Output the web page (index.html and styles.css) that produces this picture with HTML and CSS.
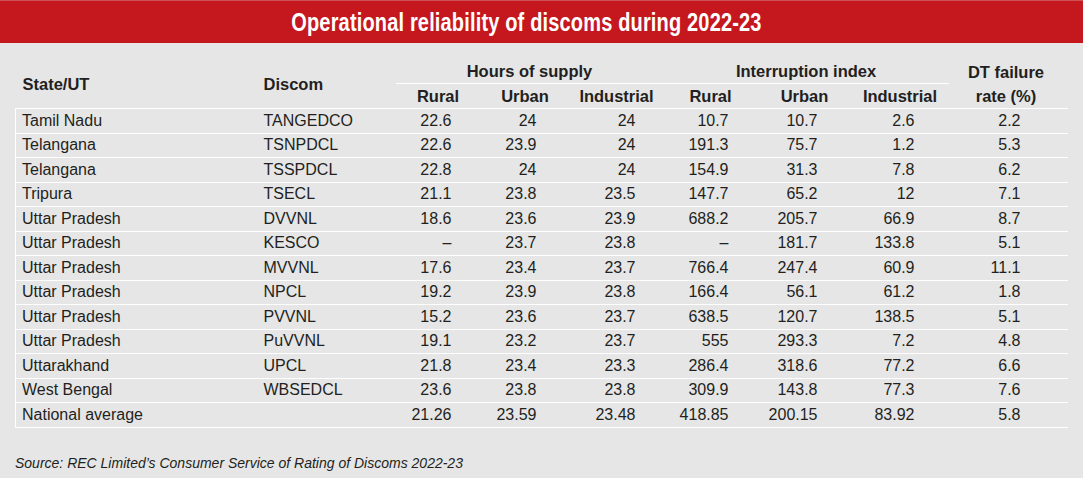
FILE: index.html
```html
<!DOCTYPE html>
<html lang="en">
<head>
<meta charset="utf-8">
<title>Operational reliability of discoms during 2022-23</title>
<link rel="stylesheet" href="styles.css">
</head>
<body>
<div class="page">
  <header class="banner"><h1 class="title"><span>Operational reliability of discoms during 2022-23</span></h1></header>
  <div class="content">
    <table class="data">
      <colgroup>
        <col class="c-state"><col class="c-discom"><col class="c-hr"><col class="c-hu"><col class="c-hi"><col class="c-ir"><col class="c-iu"><col class="c-ii"><col class="c-dt">
      </colgroup>
      <thead>
        <tr class="hrow1">
          <th rowspan="2" class="th-left th-state">State/UT</th>
          <th rowspan="2" class="th-left th-discom">Discom</th>
          <th colspan="3" class="th-group">Hours of supply</th>
          <th colspan="3" class="th-group">Interruption index</th>
          <th rowspan="2" class="th-dt">DT failure<br>rate (%)</th>
        </tr>
        <tr class="hrow2">
          <th>Rural</th><th>Urban</th><th>Industrial</th>
          <th>Rural</th><th>Urban</th><th>Industrial</th>
        </tr>
      </thead>
      <tbody>
        <tr><td class="state">Tamil Nadu</td><td class="discom">TANGEDCO</td><td class="hr">22.6</td><td class="hu">24</td><td class="hi">24</td><td class="ir">10.7</td><td class="iu">10.7</td><td class="ii">2.6</td><td class="dt">2.2</td></tr>
        <tr><td class="state">Telangana</td><td class="discom">TSNPDCL</td><td class="hr">22.6</td><td class="hu">23.9</td><td class="hi">24</td><td class="ir">191.3</td><td class="iu">75.7</td><td class="ii">1.2</td><td class="dt">5.3</td></tr>
        <tr><td class="state">Telangana</td><td class="discom">TSSPDCL</td><td class="hr">22.8</td><td class="hu">24</td><td class="hi">24</td><td class="ir">154.9</td><td class="iu">31.3</td><td class="ii">7.8</td><td class="dt">6.2</td></tr>
        <tr><td class="state">Tripura</td><td class="discom">TSECL</td><td class="hr">21.1</td><td class="hu">23.8</td><td class="hi">23.5</td><td class="ir">147.7</td><td class="iu">65.2</td><td class="ii">12</td><td class="dt">7.1</td></tr>
        <tr><td class="state">Uttar Pradesh</td><td class="discom">DVVNL</td><td class="hr">18.6</td><td class="hu">23.6</td><td class="hi">23.9</td><td class="ir">688.2</td><td class="iu">205.7</td><td class="ii">66.9</td><td class="dt">8.7</td></tr>
        <tr><td class="state">Uttar Pradesh</td><td class="discom">KESCO</td><td class="hr">–</td><td class="hu">23.7</td><td class="hi">23.8</td><td class="ir">–</td><td class="iu">181.7</td><td class="ii">133.8</td><td class="dt">5.1</td></tr>
        <tr><td class="state">Uttar Pradesh</td><td class="discom">MVVNL</td><td class="hr">17.6</td><td class="hu">23.4</td><td class="hi">23.7</td><td class="ir">766.4</td><td class="iu">247.4</td><td class="ii">60.9</td><td class="dt">11.1</td></tr>
        <tr><td class="state">Uttar Pradesh</td><td class="discom">NPCL</td><td class="hr">19.2</td><td class="hu">23.9</td><td class="hi">23.8</td><td class="ir">166.4</td><td class="iu">56.1</td><td class="ii">61.2</td><td class="dt">1.8</td></tr>
        <tr><td class="state">Uttar Pradesh</td><td class="discom">PVVNL</td><td class="hr">15.2</td><td class="hu">23.6</td><td class="hi">23.7</td><td class="ir">638.5</td><td class="iu">120.7</td><td class="ii">138.5</td><td class="dt">5.1</td></tr>
        <tr><td class="state">Uttar Pradesh</td><td class="discom">PuVVNL</td><td class="hr">19.1</td><td class="hu">23.2</td><td class="hi">23.7</td><td class="ir">555</td><td class="iu">293.3</td><td class="ii">7.2</td><td class="dt">4.8</td></tr>
        <tr><td class="state">Uttarakhand</td><td class="discom">UPCL</td><td class="hr">21.8</td><td class="hu">23.4</td><td class="hi">23.3</td><td class="ir">286.4</td><td class="iu">318.6</td><td class="ii">77.2</td><td class="dt">6.6</td></tr>
        <tr><td class="state">West Bengal</td><td class="discom">WBSEDCL</td><td class="hr">23.6</td><td class="hu">23.8</td><td class="hi">23.8</td><td class="ir">309.9</td><td class="iu">143.8</td><td class="ii">77.3</td><td class="dt">7.6</td></tr>
        <tr><td class="state">National average</td><td class="discom"></td><td class="hr">21.26</td><td class="hu">23.59</td><td class="hi">23.48</td><td class="ir">418.85</td><td class="iu">200.15</td><td class="ii">83.92</td><td class="dt">5.8</td></tr>
      </tbody>
    </table>
    <p class="source">Source: REC Limited’s Consumer Service of Rating of Discoms 2022-23</p>
  </div>
</div>
</body>
</html>
```

FILE: styles.css
```css
html, body {
  margin: 0;
  padding: 0;
  background: #e6e6e7;
}

.page {
  width: 1083px;
  height: 478px;
  background: #e6e6e7;
  color: #231f20;
  font-family: "Liberation Sans", Arial, sans-serif;
  overflow: hidden;
}

.banner {
  height: 42px;
  background: #c5171e;
  border-top: 1px solid #cd5156;
  display: flex;
  align-items: center;
  justify-content: center;
  padding-right: 30px;
}

.title {
  margin: 0;
  color: #ffffff;
  font-family: "Liberation Sans Narrow", "Liberation Sans", Arial, sans-serif;
  font-weight: 700;
  font-size: 26px;
  line-height: 42px;
  white-space: nowrap;
}

.title span {
  display: inline-block;
  transform: scaleX(0.77);
  letter-spacing: 0.2px;
}

.content {
  padding: 17px 0 0 15px;
}

.data {
  border-collapse: collapse;
  table-layout: fixed;
  width: 1052px;
}

.c-state { width: 240px; }
.c-discom { width: 140px; }
.c-hr { width: 85px; }
.c-hu { width: 89px; }
.c-hi { width: 94px; }
.c-ir { width: 94px; }
.c-iu { width: 94px; }
.c-ii { width: 97px; }
.c-dt { width: 119px; }

.data th {
  font-weight: 700;
  font-size: 16.5px;
  padding: 0;
  text-align: center;
  vertical-align: middle;
  line-height: 24px;
}

.data .hrow1 th {
  height: 23px;
}

.data .hrow2 th {
  height: 24px;
}

.data th.th-group {
  border-bottom: 1px solid #ffffff;
  line-height: 23px;
}

.data th.th-left {
  text-align: left;
}

.data th.th-state {
  padding-left: 7px;
}

.data th.th-discom {
  padding-left: 8px;
}

.data th.th-dt {
  padding-right: 4px;
}

.data tbody tr {
  border-top: 1px solid #ffffff;
}

.data tbody tr:last-child {
  border-bottom: 1px solid #ffffff;
}

.data td {
  height: 23.5px;
  padding: 0;
  font-size: 16px;
  line-height: 20px;
  text-align: right;
  vertical-align: middle;
  white-space: nowrap;
}

.data td.state {
  text-align: left;
  padding-left: 6px;
  border-left: 1px solid #ffffff;
}

.data td.discom {
  text-align: left;
  padding-left: 8px;
}

.data td.hr { padding-right: 29px; }
.data td.hu { padding-right: 33px; }
.data td.hi { padding-right: 28px; }
.data td.ir { padding-right: 29px; }
.data td.iu { padding-right: 34px; }
.data td.ii { padding-right: 34px; }
.data td.dt { padding-right: 47px; }

.source {
  margin: 26px 0 0 0;
  font-size: 14px;
  font-style: italic;
  line-height: 18px;
}
```
